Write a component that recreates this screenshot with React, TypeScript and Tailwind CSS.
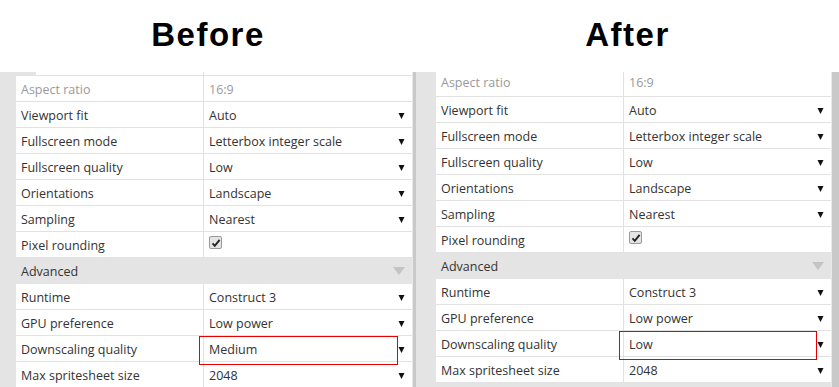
import React from 'react'

type Row =
  | { kind: 'prop'; label: string; value?: string; dropdown?: boolean; disabled?: boolean; checkbox?: boolean; highlight?: boolean }
  | { kind: 'section'; label: string }

const before: Row[] = [
  { kind: 'prop', label: 'Aspect ratio', value: '16:9', disabled: true },
  { kind: 'prop', label: 'Viewport fit', value: 'Auto', dropdown: true },
  { kind: 'prop', label: 'Fullscreen mode', value: 'Letterbox integer scale', dropdown: true },
  { kind: 'prop', label: 'Fullscreen quality', value: 'Low', dropdown: true },
  { kind: 'prop', label: 'Orientations', value: 'Landscape', dropdown: true },
  { kind: 'prop', label: 'Sampling', value: 'Nearest', dropdown: true },
  { kind: 'prop', label: 'Pixel rounding', checkbox: true },
  { kind: 'section', label: 'Advanced' },
  { kind: 'prop', label: 'Runtime', value: 'Construct 3', dropdown: true },
  { kind: 'prop', label: 'GPU preference', value: 'Low power', dropdown: true },
  { kind: 'prop', label: 'Downscaling quality', value: 'Medium', dropdown: true, highlight: true },
  { kind: 'prop', label: 'Max spritesheet size', value: '2048', dropdown: true },
]

const after: Row[] = before.map((r) =>
  r.kind === 'prop' && r.highlight ? { ...r, value: 'Low' } : r
)

function Arrow() {
  return (
    <svg width="7" height="8" viewBox="0 0 7 8" className="shrink-0">
      <path d="M0.5 1 L6.5 1 L3.5 7 Z" fill="#111" />
    </svg>
  )
}

function Checkbox() {
  return (
    <div className="w-[13px] h-[13px] rounded-[2px] border border-[#9a9a9a] bg-[#e4e4e4] flex items-center justify-center">
      <svg width="10" height="10" viewBox="0 0 10 10">
        <path d="M1.5 5.3 L3.8 7.8 L8.6 1.8" stroke="#222" strokeWidth="1.9" fill="none" />
      </svg>
    </div>
  )
}

function PropRow({ row, first }: { row: Row; first?: boolean }) {
  if (row.kind === 'section') {
    return (
      <div className="h-[26px] flex items-center bg-[#e4e4e4] pl-[5px] pr-[7px] text-[#333]">
        <span className="flex-1 pt-[2px]">{row.label}</span>
        <svg width="12" height="8" viewBox="0 0 12 8">
          <path d="M0 0 L12 0 L6 8 Z" fill="#c4c4c4" />
        </svg>
      </div>
    )
  }
  return (
    <div
      className={`flex items-stretch bg-white border-b border-[#e2e2e2] ${first ? 'h-[25px]' : 'h-[26px]'}`}
    >
      <div
        className={`w-[188px] shrink-0 border-r border-[#e2e2e2] pl-[5px] flex ${first ? 'items-end pb-[3px]' : 'items-center pt-[3px]'} ${row.disabled ? 'text-[#9a9a9a]' : 'text-[#333]'}`}
      >
        {row.label}
      </div>
      <div className={`flex-1 relative flex pl-[5px] pr-[7px] ${row.checkbox ? 'items-start pt-[4px]' : first ? 'items-end pb-[3px]' : 'items-center pt-[3px]'} ${row.disabled ? 'text-[#9a9a9a]' : 'text-[#333]'}`}>
        {row.checkbox ? <Checkbox /> : <span className="flex-1">{row.value}</span>}
        {row.dropdown && <Arrow />}
        {row.highlight && (
          <div className="absolute left-[-5px] right-[14px] top-0 h-[29px] border border-[#e60000] pointer-events-none" />
        )}
      </div>
    </div>
  )
}

function Panel({ rows, variant }: { rows: Row[]; variant: 'before' | 'after' }) {
  const isBefore = variant === 'before'
  return (
    <div className="flex flex-1 bg-[#e4e4e4] overflow-hidden">
      <div className={isBefore ? 'w-[16px] shrink-0' : 'w-[20px] shrink-0'} />
      <div className={isBefore ? 'w-[396px] shrink-0' : 'w-[395px] shrink-0'}>
        {isBefore && (
          <div className="h-[3px] flex border-b border-[#e2e2e2] box-content">
            <div className="w-[20px] bg-[#e4e4e4]" />
            <div className="w-[168px] bg-white border-r border-[#e2e2e2]" />
            <div className="flex-1 bg-white" />
          </div>
        )}
        {rows.map((r, i) => (
          <PropRow key={i} row={r} first={!isBefore && i === 0} />
        ))}
      </div>
      <div className="w-[1px] shrink-0 bg-[#e9e9e9]" />
      <div className={isBefore ? 'w-[3px] shrink-0 bg-[#c9c9c9]' : 'w-[7px] shrink-0 bg-[#c9c9c9]'} />
    </div>
  )
}

export default function App() {
  return (
    <div
      className="w-[839px] h-[387px] overflow-hidden bg-white flex flex-col text-[12.5px]"
      style={{ fontFamily: '"Open Sans", "Noto Sans", sans-serif' }}
    >
      <div className="h-[72px] flex shrink-0">
        <div className="w-[416px] flex items-center justify-center pb-[2px]">
          <h1 className="text-[33px] font-bold tracking-[1.5px] text-black" style={{ fontFamily: '"Liberation Sans", Arial, sans-serif' }}>
            Before
          </h1>
        </div>
        <div className="flex-1 flex items-center justify-center pb-[2px]">
          <h1 className="text-[33px] font-bold tracking-[1.5px] text-black" style={{ fontFamily: '"Liberation Sans", Arial, sans-serif' }}>
            After
          </h1>
        </div>
      </div>
      <div className="flex flex-1 min-h-0">
        <div className="w-[416px] flex shrink-0">
          <Panel rows={before} variant="before" />
        </div>
        <div className="flex-1 flex">
          <Panel rows={after} variant="after" />
        </div>
      </div>
    </div>
  )
}
